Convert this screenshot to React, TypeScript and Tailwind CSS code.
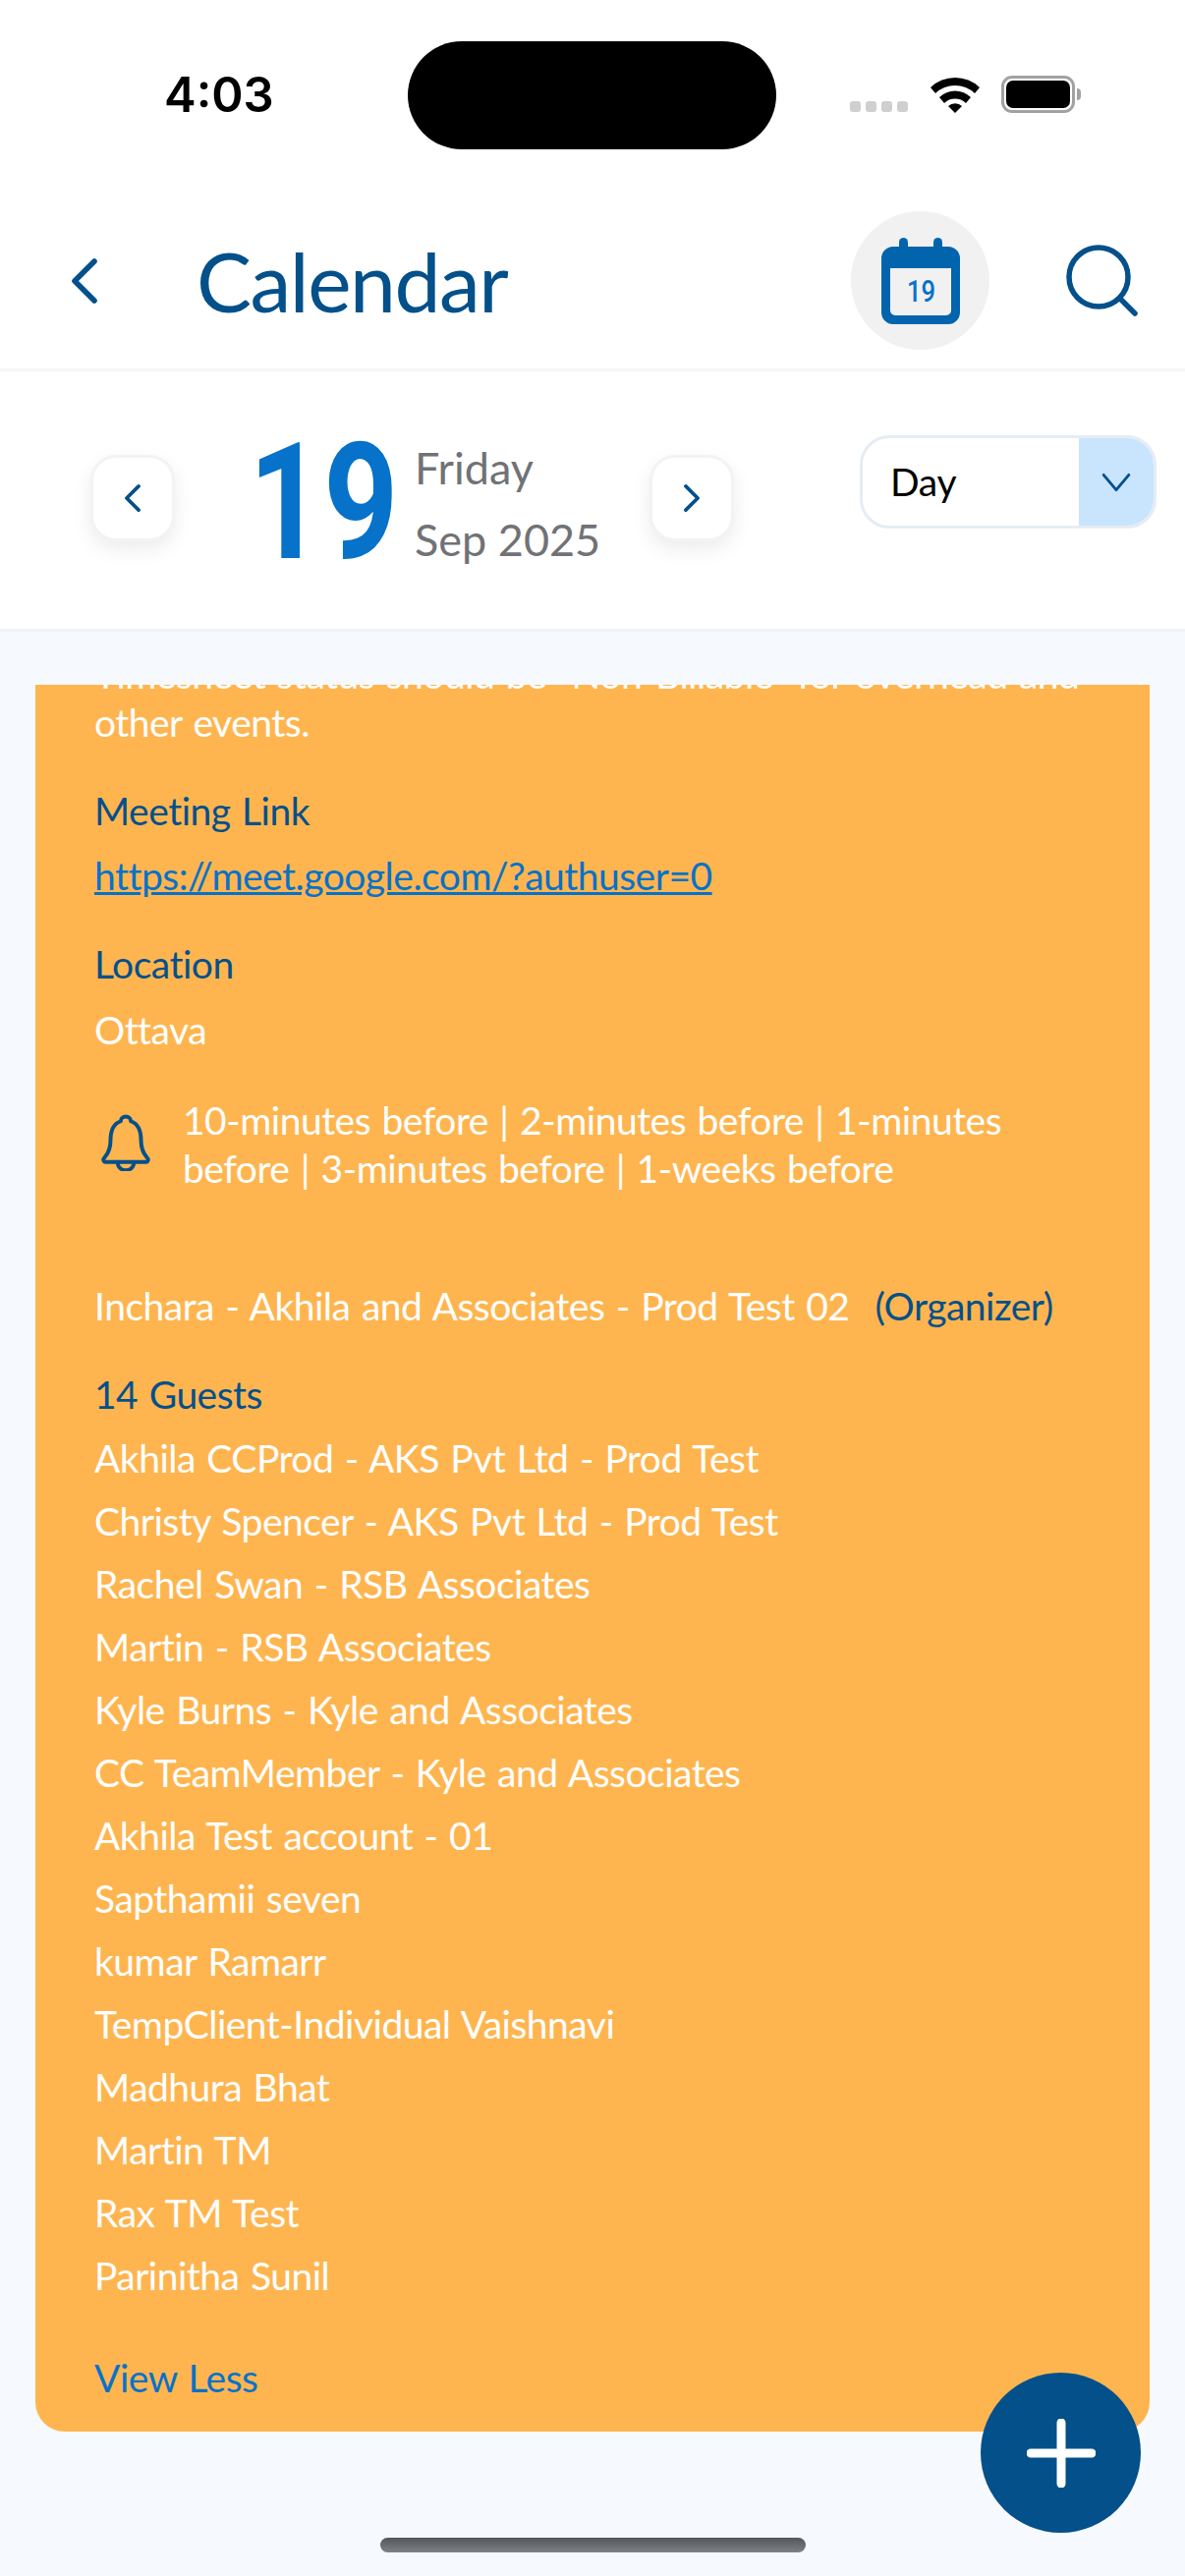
const guests = [
  "Akhila CCProd - AKS Pvt Ltd - Prod Test",
  "Christy Spencer - AKS Pvt Ltd - Prod Test",
  "Rachel Swan - RSB Associates",
  "Martin - RSB Associates",
  "Kyle Burns - Kyle and Associates",
  "CC TeamMember - Kyle and Associates",
  "Akhila Test account - 01",
  "Sapthamii seven",
  "kumar Ramarr",
  "TempClient-Individual Vaishnavi",
  "Madhura Bhat",
  "Martin TM",
  "Rax TM Test",
  "Parinitha Sunil",
];

function Chevron({ dir, className, width = 3 }: { dir: "left" | "right" | "down"; className?: string; width?: number }) {
  const d = dir === "left" ? "M19 4 L9 14 L19 24" : dir === "right" ? "M9 4 L19 14 L9 24" : "M4 8 L14 20 L24 8";
  return (
    <svg viewBox="0 0 28 28" className={className} fill="none" stroke="currentColor" strokeWidth={width} strokeLinecap="round" strokeLinejoin="round">
      <path d={d} />
    </svg>
  );
}

function StatusBar() {
  return (
    <div className="flex h-[152px] shrink-0 items-end">
      <div className="flex h-[110px] w-full items-center">
        <span className="ml-[167px] mt-[-2px] w-[248px] font-['Inter'] text-[49px] font-semibold leading-none text-black">4:03</span>
        <div className="h-[110px] w-[375px] rounded-[55px] bg-black" />
        <div className="ml-[75px] mt-[-2px] flex items-center">
          <div className="mt-[24px] flex gap-[5px]">
            <div className="h-[11px] w-[11px] rounded-[3px] bg-[#cfcfcf]" />
            <div className="h-[11px] w-[11px] rounded-[3px] bg-[#cfcfcf]" />
            <div className="h-[11px] w-[11px] rounded-[3px] bg-[#cfcfcf]" />
            <div className="h-[11px] w-[11px] rounded-[3px] bg-[#cfcfcf]" />
          </div>
          <svg viewBox="0 0 50 37" className="ml-[23px] h-[37px] w-[50px]">
            <path d="M0 11 A36 36 0 0 1 50 11 L45 17 A29 29 0 0 0 5 17 Z" fill="#000" />
            <path d="M9 21 A23 23 0 0 1 41 21 L36 27 A16 16 0 0 0 14 27 Z" fill="#000" />
            <path d="M18 30 A10 10 0 0 1 32 30 L25 37 Z" fill="#000" />
          </svg>
          <div className="ml-[22px] flex items-center">
            <div className="flex h-[38px] w-[75px] items-center justify-center rounded-[11px] border-[3px] border-[#a2a2a2] p-[2px]">
              <div className="h-full w-full rounded-[7px] bg-black" />
            </div>
            <div className="ml-[2px] h-[12px] w-[4px] rounded-r-full bg-[#a2a2a2]" />
          </div>
        </div>
      </div>
    </div>
  );
}

export default function App() {
  return (
    <div className="relative flex h-[2622px] w-[1206px] flex-col overflow-hidden bg-[#f6f9fe] font-['Lato',sans-serif]">
      <div className="shrink-0 bg-white">
        <StatusBar />
        {/* Header */}
        <div className="flex h-[226px] items-center border-b-[3px] border-[#f5f6f9] pt-[44px]">
          <Chevron dir="left" width={2.8} className="ml-[58px] h-[56px] w-[56px] text-[#03508a]" />
          <h1 className="ml-[86px] text-[84px] font-normal leading-none tracking-[-1.5px] text-[#03508a]">Calendar</h1>
          <div className="ml-auto flex h-[141px] w-[141px] items-center justify-center rounded-full bg-[#f1f1f2]">
            <svg viewBox="0 0 80 88" className="h-[88px] w-[80px]">
              <rect x="18" y="0" width="9" height="20" rx="4.5" fill="#0364ae" />
              <rect x="53" y="0" width="9" height="20" rx="4.5" fill="#0364ae" />
              <path d="M12 9 H68 A12 12 0 0 1 80 21 V76 A12 12 0 0 1 68 88 H12 A12 12 0 0 1 0 76 V21 A12 12 0 0 1 12 9 Z M9 31 V74 A5 5 0 0 0 14 79 H66 A5 5 0 0 0 71 74 V31 Z" fill="#0364ae" fillRule="evenodd" />
              <text x="26" y="65" fontFamily="Roboto" fontSize="32" fontWeight="500" fill="#0672c9" textLength="29" lengthAdjust="spacingAndGlyphs">19</text>
            </svg>
          </div>
          <svg viewBox="0 0 73 73" className="ml-[78px] mr-[48px] h-[73px] w-[73px]" fill="none" stroke="#03508a" strokeWidth="5.5" strokeLinecap="round">
            <circle cx="33" cy="33" r="30" />
            <path d="M55 55 L70 70" />
          </svg>
        </div>
        {/* Date bar */}
        <div className="flex h-[265px] items-start border-b-[3px] border-[#f0f3f8]">
          <button className="ml-[92px] mt-[85px] flex h-[88px] w-[86px] items-center justify-center rounded-[26px] border-[3px] border-[#f2f3f5] bg-white shadow-[0_8px_20px_rgba(0,0,0,0.08)]">
            <Chevron dir="left" className="h-[34px] w-[34px] text-[#03508a]" />
          </button>
          <div className="ml-[75px] mt-[59px] w-[169px]">
            <span className="block origin-left scale-x-[0.8] font-['Roboto'] text-[166px] font-bold leading-[150px] text-[#0672c9]">19</span>
          </div>
          <div className="mt-[62px] flex w-[239px] flex-col text-[45px] leading-[73px] text-[#717276]">
            <span>Friday</span>
            <span>Sep 2025</span>
          </div>
          <button className="mt-[85px] flex h-[88px] w-[86px] items-center justify-center rounded-[26px] border-[3px] border-[#f2f3f5] bg-white shadow-[0_8px_20px_rgba(0,0,0,0.08)]">
            <Chevron dir="right" className="h-[34px] w-[34px] text-[#03508a]" />
          </button>
          <div className="ml-[128px] mt-[65px] flex h-[95px] w-[302px] overflow-hidden rounded-[30px] border-[3px] border-[#e6ecf4]">
            <span className="flex-1 pl-[28px] text-[39px] leading-[88px] tracking-[-0.3px] text-black">Day</span>
            <span className="flex w-[76px] items-center justify-center bg-[#c9e4fd]">
              <Chevron dir="down" width={2.2} className="h-[36px] w-[36px] text-[#03508a]" />
            </span>
          </div>
        </div>
      </div>

      {/* Scrolled event card */}
      <div className="mx-[36px] mt-[54px] flex flex-col overflow-hidden">
        <div className="mt-[-35px] rounded-b-[30px] bg-[#ffb54f] pb-[30px] pl-[60px] pr-[40px] text-[39px] tracking-[-0.5px] [word-spacing:2px] text-white">
          <p className="leading-[49px]">Timesheet status should be "Non-Billable" for overhead and<br />other events.</p>
          <p className="mt-[41px] leading-[49px] text-[#03508a]">Meeting Link</p>
          <p className="mt-[17px] leading-[49px] text-[#0672c9] underline">https://meet.google.com/?authuser=0</p>
          <p className="mt-[41px] leading-[49px] text-[#03508a]">Location</p>
          <p className="mt-[18px] leading-[49px]">Ottava</p>
          <div className="mt-[43px] flex items-start">
            <svg viewBox="0 2 50 56" className="ml-[6px] mt-[18px] h-[58px] w-[52px] shrink-0" fill="none" stroke="#03508a" strokeWidth="3.8" strokeLinecap="round" strokeLinejoin="round">
              <path d="M3 47 C3 44 10 42 10 28 C10 16 14 11 20 9 C20 3 30 3 30 9 C36 11 40 16 40 28 C40 42 47 44 47 47 C47 48 46 49 45 49 H5 C4 49 3 48 3 47 Z" />
              <path d="M17 49 C17 60 33 60 33 49" />
            </svg>
            <p className="ml-[32px] pr-[20px] leading-[49px]">10-minutes before | 2-minutes before | 1-minutes before | 3-minutes before | 1-weeks before</p>
          </div>
          <p className="mt-[91px] leading-[49px]">
            Inchara - Akhila and Associates - Prod Test 02
            <span className="ml-[26px] text-[#03508a]">(Organizer)</span>
          </p>
          <p className="mt-[41px] leading-[49px] text-[#03508a]">14 Guests</p>
          <ul className="mt-[8px]">
            {guests.map((g) => (
              <li key={g} className="leading-[64px]">{g}</li>
            ))}
          </ul>
          <p className="mt-[48px] leading-[49px] text-[#0672c9]">View Less</p>
        </div>
      </div>

      {/* Floating add button */}
      <button className="absolute left-[998px] top-[2415px] flex h-[163px] w-[163px] items-center justify-center rounded-full bg-[#03508a]">
        <svg viewBox="0 0 70 70" className="h-[70px] w-[70px]" stroke="#fff" strokeWidth="9" strokeLinecap="round">
          <path d="M35 4 V66 M4 35 H66" />
        </svg>
      </button>
      {/* Home indicator */}
      <div className="absolute left-[387px] top-[2583px] h-[15px] w-[433px] rounded-full bg-gradient-to-b from-[#555659] to-[#808184]" />
    </div>
  );
}
